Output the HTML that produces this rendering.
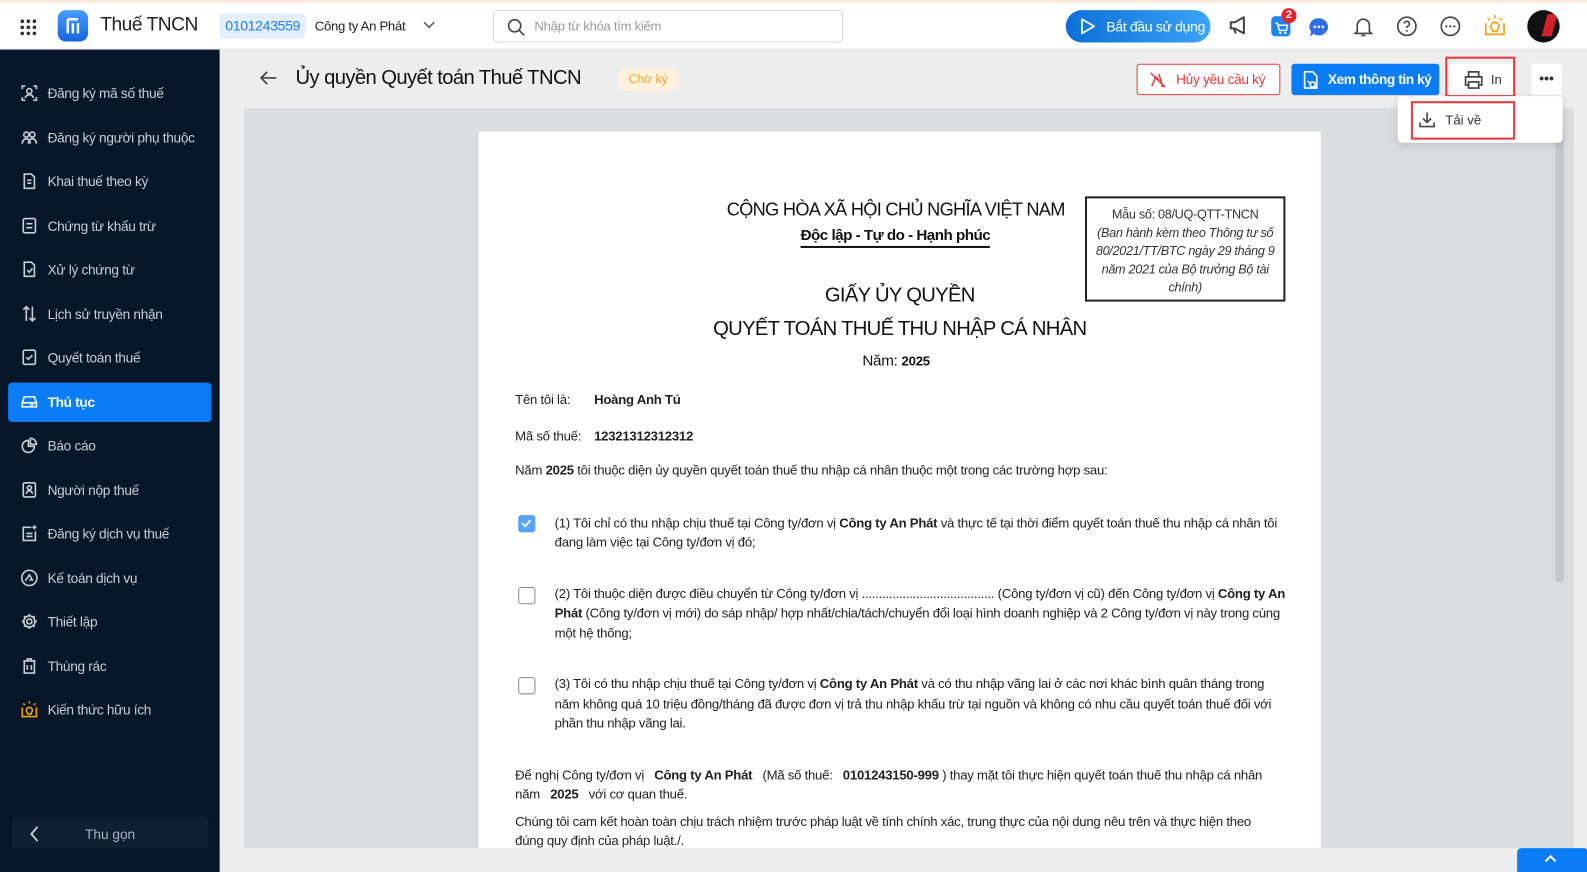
<!DOCTYPE html>
<html><head><meta charset="utf-8">
<style>
*{margin:0;padding:0;box-sizing:border-box}
body{width:1587px;height:862px;overflow:hidden;background:#ededed;font-family:"Liberation Sans",sans-serif;color:#1f1f1f;position:relative}
#wrap{position:absolute;left:0;top:0;width:1568px;height:852px;transform:scale(1.01212);transform-origin:0 0}
.a{position:absolute;white-space:nowrap}
#top{position:absolute;left:0;top:0;width:1568px;height:3px;background:#fbe9dc}
#hdr{position:absolute;left:0;top:3px;width:1568px;height:46px;background:#fff;border-bottom:1px solid #e6e6e6}
#side{position:absolute;left:0;top:49px;width:217px;height:813px;background:#071628}
.mi{position:absolute;left:20px;font-size:13.5px;color:#c9ced6;letter-spacing:-0.3px;display:flex;align-items:center;gap:9px}
.mi svg{width:18px;height:18px;stroke:#c9ced6;fill:none;stroke-width:1.6}
.doc{font-size:13px;letter-spacing:-0.25px;color:#222}
b{font-weight:bold}
.cb{position:absolute;left:512px;width:17px;height:17px;border:1.5px solid #888;border-radius:3px;background:#fff}
</style></head><body><div id="wrap">
<div id="top"></div>
<div id="hdr">
 <svg class="a" style="left:19px;top:15px" width="18" height="18"><g fill="#333"><circle cx="3" cy="3" r="1.8"/><circle cx="9" cy="3" r="1.8"/><circle cx="15" cy="3" r="1.8"/><circle cx="3" cy="9" r="1.8"/><circle cx="9" cy="9" r="1.8"/><circle cx="15" cy="9" r="1.8"/><circle cx="3" cy="15" r="1.8"/><circle cx="9" cy="15" r="1.8"/><circle cx="15" cy="15" r="1.8"/></g></svg>
 <div class="a" style="left:57px;top:7px;width:30px;height:31px;border-radius:8px;background:linear-gradient(#4a9bff,#1565e0)"><svg width="30" height="31"><path d="M10 9h10M10 9v14M15 13v10M20 13v10" stroke="#fff" stroke-width="2.4" fill="none"/></svg></div>
 <div class="a" style="left:99px;top:11px;font-size:19px;color:#222;letter-spacing:-0.5px">Thuế TNCN</div>
 <div class="a" style="left:217px;top:10px;width:85px;height:25px;background:#e3efff;border-radius:4px;color:#1a7cf2;font-size:14px;line-height:25px;text-align:center;letter-spacing:-0.4px">0101243559</div>
 <div class="a" style="left:311px;top:15px;font-size:13px;color:#222;letter-spacing:-0.3px">Công ty An Phát</div>
 <svg class="a" style="left:418px;top:18px" width="12" height="8"><path d="M1 1l5 5 5-5" stroke="#555" stroke-width="1.5" fill="none"/></svg>
 <div class="a" style="left:487px;top:7px;width:346px;height:32px;border:1px solid #d9d9d9;border-radius:4px"></div>
 <svg class="a" style="left:501px;top:15px" width="18" height="18"><circle cx="7.5" cy="7.5" r="6" stroke="#444" stroke-width="1.6" fill="none"/><path d="M12 12l5 5" stroke="#444" stroke-width="1.6"/></svg>
 <div class="a" style="left:528px;top:15px;font-size:13px;color:#9a9a9a;letter-spacing:-0.3px">Nhập từ khóa tìm kiếm</div>
 <div class="a" style="left:1053px;top:7px;width:143px;height:32px;border-radius:16px;background:linear-gradient(90deg,#0c6fd8,#3aa4f6)"></div>
 <svg class="a" style="left:1065px;top:14px" width="18" height="18"><path d="M4 2l12 7-12 7z" stroke="#fff" stroke-width="1.8" fill="none" stroke-linejoin="round"/></svg>
 <div class="a" style="left:1093px;top:15px;font-size:14px;color:#fff;letter-spacing:-0.4px">Bắt đầu sử dụng</div>
 <svg class="a" style="left:1213px;top:12px" width="22" height="20"><path d="M3 7h4l9-5v16l-9-5H3z M6 13l2 5" stroke="#444" stroke-width="2" fill="none" stroke-linejoin="round"/></svg>
 <div class="a" style="left:1256px;top:13px;width:19px;height:20px;border-radius:4px;background:#1e86f0"></div>
 <svg class="a" style="left:1258px;top:16px" width="16" height="16"><path d="M2 4h2l2 7h7l1-5H5" stroke="#fff" stroke-width="1.5" fill="none"/><circle cx="7" cy="13.5" r="1.2" fill="#fff"/><circle cx="12" cy="13.5" r="1.2" fill="#fff"/></svg>
 <div class="a" style="left:1266px;top:5px;width:15px;height:15px;border-radius:50%;background:#e8202a;color:#fff;font-size:11px;font-weight:bold;text-align:center;line-height:15px">2</div>
 <svg class="a" style="left:1292px;top:13px" width="22" height="22"><path d="M11 2a9 8.5 0 1 1-5 15.5L2 20l1.5-4.5A9 8.5 0 0 1 11 2z" fill="#2e6ee8"/><circle cx="7" cy="10.5" r="1.3" fill="#fff"/><circle cx="11" cy="10.5" r="1.3" fill="#fff"/><circle cx="15" cy="10.5" r="1.3" fill="#fff"/></svg>
 <svg class="a" style="left:1336px;top:12px" width="22" height="22"><path d="M5 16V10a6 6 0 0 1 12 0v6l2 2H3z M9 20h4" stroke="#444" stroke-width="1.6" fill="none"/></svg>
 <svg class="a" style="left:1379px;top:12px" width="22" height="22"><circle cx="11" cy="11" r="9" stroke="#444" stroke-width="1.6" fill="none"/><path d="M8.5 8.5a2.5 2.5 0 1 1 3.5 2.3c-.7.4-1 .9-1 1.7" stroke="#444" stroke-width="1.6" fill="none"/><circle cx="11" cy="15.5" r="1" fill="#444"/></svg>
 <svg class="a" style="left:1422px;top:12px" width="22" height="22"><circle cx="11" cy="11" r="9" stroke="#444" stroke-width="1.6" fill="none"/><circle cx="7" cy="11" r="1.1" fill="#444"/><circle cx="11" cy="11" r="1.1" fill="#444"/><circle cx="15" cy="11" r="1.1" fill="#444"/></svg>
 <svg class="a" style="left:1465px;top:10px" width="24" height="24"><path d="M3 10v11h18V10 M8 13a4 4 0 1 1 8 0c0 2-2 3-2 5h-4c0-2-2-3-2-5z M12 2v3M5 5l2 2M19 5l-2 2" stroke="#f5a21b" stroke-width="1.7" fill="none"/></svg>
 <div class="a" style="left:1509px;top:7px;width:32px;height:32px;border-radius:50%;background:#111;overflow:hidden"><div style="position:absolute;left:17px;top:4px;width:10px;height:22px;background:#d3202a;transform:skewX(-15deg)"></div></div>
</div>

<div id="side">
 <div class="mi" style="top:34px"><svg viewBox="0 0 18 18"><path d="M2 5V2h3M13 2h3v3M16 13v3h-3M5 16H2v-3"/><circle cx="9" cy="7" r="2.5"/><path d="M5 14c0-2 2-3.5 4-3.5s4 1.5 4 3.5"/></svg>Đăng ký mã số thuế</div>
 <div class="mi" style="top:78px"><svg viewBox="0 0 18 18"><circle cx="6" cy="6" r="2.5"/><circle cx="12" cy="6" r="2.5"/><path d="M2 15c0-3 2-5 4-5s4 2 4 5M8 15c0-3 2-5 4-5s4 2 4 5"/></svg>Đăng ký người phụ thuộc</div>
 <div class="mi" style="top:121px"><svg viewBox="0 0 18 18"><path d="M4 2h7l3 3v11H4z M7 8h4M7 11h4"/></svg>Khai thuế theo kỳ</div>
 <div class="mi" style="top:165px"><svg viewBox="0 0 18 18"><rect x="3" y="2" width="12" height="14" rx="1.5"/><path d="M6 7h6M6 11h6"/></svg>Chứng từ khấu trừ</div>
 <div class="mi" style="top:208px"><svg viewBox="0 0 18 18"><path d="M4 2h7l3 3v11H4z M7 10l2 2 3-4"/></svg>Xử lý chứng từ</div>
 <div class="mi" style="top:252px"><svg viewBox="0 0 18 18"><path d="M6 2v14M3 5l3-3 3 3M12 16V2M9 13l3 3 3-3"/></svg>Lịch sử truyền nhận</div>
 <div class="mi" style="top:295px"><svg viewBox="0 0 18 18"><rect x="3" y="2" width="12" height="14" rx="1.5"/><path d="M6 9l2 2 4-4"/></svg>Quyết toán thuế</div>
 <div class="a" style="left:8px;top:329px;width:201px;height:39px;background:#0a7cf6;border-radius:4px"></div>
 <div class="mi" style="top:339px;color:#fff;font-weight:bold"><svg viewBox="0 0 18 18" style="stroke:#fff"><path d="M2 10l2-6h10l2 6v4H2z M2 10h14 M10 12h3"/></svg>Thủ tục</div>
 <div class="mi" style="top:382px"><svg viewBox="0 0 18 18"><path d="M8 4a6 6 0 1 0 6 6H8z M10 2v6h6a6 6 0 0 0-6-6z"/></svg>Báo cáo</div>
 <div class="mi" style="top:426px"><svg viewBox="0 0 18 18"><rect x="3" y="2" width="12" height="14" rx="1.5"/><circle cx="9" cy="7" r="2"/><path d="M6 13c0-2 1.5-3 3-3s3 1 3 3"/></svg>Người nộp thuế</div>
 <div class="mi" style="top:469px"><svg viewBox="0 0 18 18"><path d="M11 3H3v13h12V7 M6 9h6M6 12h6 M14 1v4M12 3h4"/></svg>Đăng ký dịch vụ thuế</div>
 <div class="mi" style="top:513px"><svg viewBox="0 0 18 18"><circle cx="9" cy="9" r="7.5"/><path d="M5 12l4-6 3 5h-3"/></svg>Kế toán dịch vụ</div>
 <div class="mi" style="top:556px"><svg viewBox="0 0 18 18"><circle cx="9" cy="9" r="2.5"/><path d="M9 1.5v2.5M9 14v2.5M1.5 9h2.5M14 9h2.5M3.7 3.7l1.8 1.8M12.5 12.5l1.8 1.8M3.7 14.3l1.8-1.8M12.5 5.5l1.8-1.8"/><circle cx="9" cy="9" r="5.5"/></svg>Thiết lập</div>
 <div class="mi" style="top:600px"><svg viewBox="0 0 18 18"><path d="M3 4h12M7 4V2h4v2M4 4v12h10V4M7 8v5M11 8v5"/></svg>Thùng rác</div>
 <div class="mi" style="top:643px"><svg viewBox="0 0 18 18" style="stroke:#f5a21b"><path d="M2 7v9h14V7 M6 10a3 3 0 1 1 6 0c0 1.5-1.5 2-1.5 3.5h-3C7.5 12 6 11.5 6 10z M9 1v2M3 3l1.5 1.5M15 3l-1.5 1.5"/></svg>Kiến thức hữu ích</div>
 <div class="a" style="left:12px;top:759px;width:194px;height:32px;background:#111f33;border-radius:4px"></div>
 <svg class="a" style="left:29px;top:767px" width="10" height="16"><path d="M8 1L2 8l6 7" stroke="#c9ced6" stroke-width="1.8" fill="none"/></svg>
 <div class="a" style="left:84px;top:768px;font-size:13.5px;color:#a9b0bb">Thu gọn</div>
</div>

<svg class="a" style="left:255px;top:69px" width="20" height="16"><path d="M18 8H3M9 2L3 8l6 6" stroke="#444" stroke-width="1.7" fill="none"/></svg>
<div class="a" style="left:292px;top:66px;font-size:20px;color:#111;letter-spacing:-0.6px">Ủy quyền Quyết toán Thuế TNCN</div>
<div class="a" style="left:610px;top:67px;width:61px;height:23px;border-radius:11px;background:#fff1de;color:#f5a21b;font-size:12px;line-height:23px;text-align:center">Chờ ký</div>

<div class="a" style="left:1123px;top:63px;width:142px;height:31px;border:1px solid #e23b3b;border-radius:3px;background:#fff"></div>
<svg class="a" style="left:1135px;top:70px" width="18" height="18"><path d="M3 15l4-9 3 3M10 3l3 10M2 2l14 14M12 15h4" stroke="#e23b3b" stroke-width="1.5" fill="none"/></svg>
<div class="a" style="left:1162px;top:71px;font-size:13.5px;color:#e23b3b;letter-spacing:-0.3px">Hủy yêu cầu ký</div>
<div class="a" style="left:1276px;top:63px;width:146px;height:31px;border-radius:3px;background:#0a7cf6"></div>
<svg class="a" style="left:1286px;top:69px" width="18" height="20"><path d="M3 2h8l4 4v12H3z M6 11l2 2M11 12a2.5 2.5 0 1 0 .1 0M13 15l2 2" stroke="#fff" stroke-width="1.6" fill="none"/></svg>
<div class="a" style="left:1312px;top:71px;font-size:13.5px;color:#fff;font-weight:bold;letter-spacing:-0.4px">Xem thông tin ký</div>
<div class="a" style="left:1432px;top:63px;width:64px;height:31px;background:#fff;border-radius:3px"></div>
<div class="a" style="left:1428px;top:56px;width:69px;height:40px;border:2.5px solid #e5393b"></div>
<svg class="a" style="left:1446px;top:69px" width="20" height="20"><path d="M5 7V2h10v5M5 15H2V7h16v8h-3M5 12h10v6H5z" stroke="#444" stroke-width="1.7" fill="none"/></svg>
<div class="a" style="left:1473px;top:71px;font-size:13px;color:#333">In</div>
<div class="a" style="left:1513px;top:63px;width:30px;height:31px;background:#fff;border-radius:3px;text-align:center;font-size:14px;line-height:28px;color:#333;font-weight:bold">•••</div>

<div class="a" style="left:241px;top:107px;width:1314px;height:731px;background:#dbdce0"></div>
<div class="a" style="left:1537px;top:125px;width:8px;height:450px;background:#c4c6cb;border-radius:3px"></div>
<div class="a" style="left:473px;top:130px;width:832px;height:708px;background:#fff"></div>

<div class="a" style="left:1381px;top:95px;width:163px;height:46px;background:#fff;border-radius:4px;box-shadow:0 2px 8px rgba(0,0,0,.15)"></div>
<div class="a" style="left:1394px;top:100px;width:103px;height:38px;border:2.5px solid #e5393b"></div>
<svg class="a" style="left:1401px;top:109px" width="18" height="18"><path d="M9 2v10M5 8l4 4 4-4M2 12v4h14v-4" stroke="#444" stroke-width="1.6" fill="none"/></svg>
<div class="a" style="left:1428px;top:111px;font-size:13px;color:#333">Tải về</div>

<div class="doc">
 <div class="a" style="left:718px;top:197px;font-size:18px;letter-spacing:-0.7px;color:#111">CỘNG HÒA XÃ HỘI CHỦ NGHĨA VIỆT NAM</div>
 <div class="a" style="left:791px;top:224px;font-size:15px;font-weight:bold;letter-spacing:-0.5px;color:#111;border-bottom:2px solid #111;padding-bottom:2px">Độc lập - Tự do - Hạnh phúc</div>
 <div class="a" style="left:1072px;top:194px;width:198px;height:104px;border:2px solid #222"></div>
 <div class="a" style="left:1082px;top:203px;width:178px;text-align:center;font-size:12.5px;line-height:18px;color:#333;white-space:normal;letter-spacing:-0.3px">Mẫu số: 08/UQ-QTT-TNCN<br><i>(Ban hành kèm theo Thông tư số 80/2021/TT/BTC ngày 29 tháng 9 năm 2021 của Bộ trưởng Bộ tài chính)</i></div>
 <div class="a" style="left:473px;top:281px;width:832px;text-align:center;font-size:20px;letter-spacing:-0.7px;color:#111">GIẤY ỦY QUYỀN</div>
 <div class="a" style="left:473px;top:314px;width:832px;text-align:center;font-size:20px;letter-spacing:-0.7px;color:#111">QUYẾT TOÁN THUẾ THU NHẬP CÁ NHÂN</div>
 <div class="a" style="left:852px;top:348px;font-size:15px;color:#111">Năm: <b style="font-size:13px">2025</b></div>
 <div class="a" style="left:509px;top:387px">Tên tôi là:</div><div class="a" style="left:587px;top:387px;font-weight:bold">Hoàng Anh Tú</div>
 <div class="a" style="left:509px;top:423px">Mã số thuế:</div><div class="a" style="left:587px;top:423px;font-weight:bold">12321312312312</div>
 <div class="a" style="left:509px;top:457px">Năm <b>2025</b> tôi thuộc diện ủy quyền quyết toán thuế thu nhập cá nhân thuộc một trong các trường hợp sau:</div>

 <div class="cb" style="top:509px;background:#5aa2f7;border-color:#5aa2f7"><svg width="14" height="14" style="position:absolute;left:0;top:0"><path d="M3 7l3 3 5-6" stroke="#fff" stroke-width="1.8" fill="none"/></svg></div>
 <div class="a" style="left:548px;top:509px">(1) Tôi chỉ có thu nhập chịu thuế tại Công ty/đơn vị <b>Công ty An Phát</b> và thực tế tại thời điểm quyết toán thuế thu nhập cá nhân tôi</div>
 <div class="a" style="left:548px;top:528px">đang làm việc tại Công ty/đơn vị đó;</div>

 <div class="cb" style="top:580px"></div>
 <div class="a" style="left:548px;top:579px">(2) Tôi thuộc diện được điều chuyển từ Công ty/đơn vị ....................................... (Công ty/đơn vị cũ) đến Công ty/đơn vị <b>Công ty An</b></div>
 <div class="a" style="left:548px;top:598px"><b>Phát</b> (Công ty/đơn vị mới) do sáp nhập/ hợp nhất/chia/tách/chuyển đổi loại hình doanh nghiệp và 2 Công ty/đơn vị này trong cùng</div>
 <div class="a" style="left:548px;top:618px">một hệ thống;</div>

 <div class="cb" style="top:669px"></div>
 <div class="a" style="left:548px;top:668px">(3) Tôi có thu nhập chịu thuế tại Công ty/đơn vị <b>Công ty An Phát</b> và có thu nhập vãng lai ở các nơi khác bình quân tháng trong</div>
 <div class="a" style="left:548px;top:688px">năm không quá 10 triệu đồng/tháng đã được đơn vị trả thu nhập khấu trừ tại nguồn và không có nhu cầu quyết toán thuế đối với</div>
 <div class="a" style="left:548px;top:707px">phần thu nhập vãng lai.</div>

 <div class="a" style="left:509px;top:758px">Để nghị Công ty/đơn vị &nbsp; <b>Công ty An Phát</b> &nbsp; (Mã số thuế: &nbsp; <b>0101243150-999</b> ) thay mặt tôi thực hiện quyết toán thuế thu nhập cá nhân</div>
 <div class="a" style="left:509px;top:777px">năm &nbsp; <b>2025</b> &nbsp; với cơ quan thuế.</div>
 <div class="a" style="left:509px;top:804px">Chúng tôi cam kết hoàn toàn chịu trách nhiệm trước pháp luật về tính chính xác, trung thực của nội dung nêu trên và thực hiện theo</div>
 <div class="a" style="left:509px;top:823px">đúng quy định của pháp luật./.</div>
</div>
<div class="a" style="left:217px;top:838px;width:1360px;height:24px;background:#ededed"></div>
<div class="a" style="left:1499px;top:838px;width:70px;height:24px;background:#0a7cf6;border-radius:4px 4px 0 0"></div>
<svg class="a" style="left:1526px;top:844px" width="12" height="8"><path d="M1 7l5-5 5 5" stroke="#fff" stroke-width="2" fill="none"/></svg>
<div class="a" style="left:0;top:838px;width:217px;height:24px;background:#071628"></div>
</div></body></html>
